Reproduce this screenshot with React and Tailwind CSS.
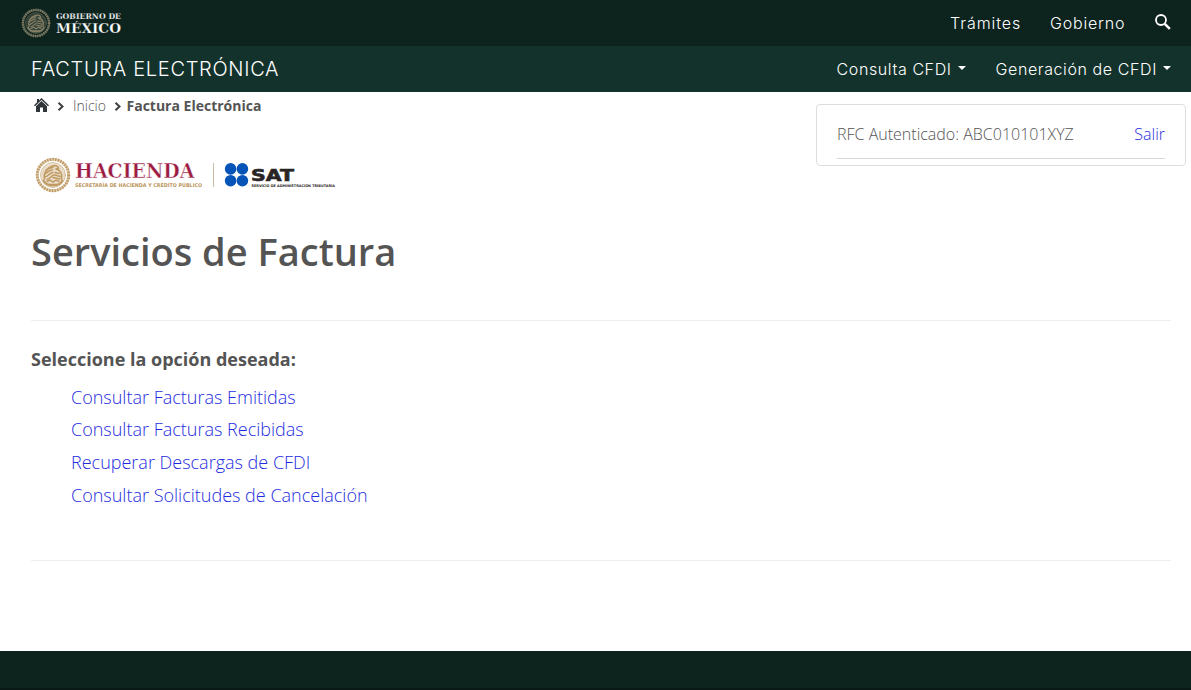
import React from "react";

const links = [
  "Consultar Facturas Emitidas",
  "Consultar Facturas Recibidas",
  "Recuperar Descargas de CFDI",
  "Consultar Solicitudes de Cancelación",
];

function Seal({ color, className }) {
  return (
    <svg viewBox="0 0 36 36" className={className} fill="none" stroke={color} strokeLinecap="round">
      <circle cx="18" cy="18" r="15.7" strokeWidth="3" strokeDasharray="1.4 1.3" strokeLinecap="butt" />
      <circle cx="18" cy="18" r="15.7" strokeWidth="2.8" opacity=".5" />
      <circle cx="18" cy="18" r="12.4" strokeWidth=".7" />
      <circle cx="18" cy="18" r="11.6" fill={color} fillOpacity=".35" stroke="none" />
      <path d="M9.5 22c-1-6 2-11 8-13 3-1 6 0 6 2.500l-3 .5c5 1 7 5 6 10" strokeWidth="1.6" />
      <path d="M11 13.500c2-2 4-3 7-3M9.500 17c3-1 4-4 8-4M10 20c3 0 4-4 8-4.500M12 22.500c3 0 4-4 7-4.500" strokeWidth="1.5" />
      <path d="M20 15.500l4 1M20 18l5 1.500M18 20.500l7 1.500" strokeWidth="1.500" />
      <path d="M8.500 23.500c3 6.500 16 6.500 19 0" strokeWidth="2" />
      <path d="M12 24.500l3-1.500 3 2 3-2 3 1.500M14 27.500h8" strokeWidth="1.500" />
    </svg>
  );
}

function GobiernoLogo() {
  return (
    <a className="flex items-center gap-[5px]">
      <Seal color="#827e66" className="h-[30px] w-[30px]" />
      <svg width="66" height="30" viewBox="0 0 66 30" fill="#fff" fontFamily="'DejaVu Serif', serif" fontWeight="700">
        <text x="0" y="11.2" fontSize="7.8" stroke="#0c231e" strokeWidth=".2" textLength="65" lengthAdjust="spacingAndGlyphs">GOBIERNO DE</text>
        <text x="0" y="25" fontSize="13" stroke="#0c231e" strokeWidth=".25" textLength="65" lengthAdjust="spacingAndGlyphs">MÉXICO</text>
      </svg>
    </a>
  );
}

function BrandLogos() {
  return (
    <div className="flex h-9 items-center">
      <Seal color="#bf9a62" className="h-9 w-9" />
      <svg width="270" height="36" viewBox="0 0 270 36">
        <text x="4" y="21" fontSize="19.5" fontWeight="700" fontFamily="'DejaVu Serif', serif" fill="#9b1b42" stroke="#fff" strokeWidth=".4" textLength="119.500" lengthAdjust="spacingAndGlyphs">HACIENDA</text>
        <text x="4" y="29.800" fontSize="5.2" fontWeight="700" fill="#bc955c" fontFamily="'DejaVu Sans', sans-serif" textLength="127" lengthAdjust="spacingAndGlyphs">SECRETARÍA DE HACIENDA Y CRÉDITO PÚBLICO</text>
        <path d="M142.500 6v24" stroke="#c9bba5" />
        <g fill="#0754b8">
          <circle cx="159.600" cy="11.900" r="5.800" />
          <circle cx="171.400" cy="11.900" r="5.800" />
          <circle cx="159.600" cy="23.700" r="5.800" />
          <circle cx="171.400" cy="23.700" r="5.800" />
        </g>
        <g fill="#292525" fontFamily="'DejaVu Sans', sans-serif" fontWeight="700">
          <text x="180" y="23.800" fontSize="15" stroke="#292525" strokeWidth=".6" textLength="43" lengthAdjust="spacingAndGlyphs">SAT</text>
          <text x="180.500" y="29.500" fontSize="3.600" textLength="83.500" lengthAdjust="spacingAndGlyphs">SERVICIO DE ADMINISTRACIÓN TRIBUTARIA</text>
        </g>
      </svg>
    </div>
  );
}

function Caret() {
  return <span className="ml-1.5 mb-[2px] border-x-4 border-t-4 border-x-transparent border-t-white" />;
}

function Chevron() {
  return (
    <svg width="7" height="9" viewBox="0 0 7 9" fill="none" stroke="#404041" strokeWidth="2">
      <path d="M1.500 .8l4 3.700-4 3.700" />
    </svg>
  );
}

export default function App() {
  return (
    <div className="flex h-[690px] w-full flex-col overflow-hidden bg-white font-['Open_Sans',sans-serif] text-[#545454]">
      <header className="font-['Inter',sans-serif] text-white">
        <div className="flex h-[46px] items-center justify-between bg-[#0c231e] pl-[21px] pr-5">
          <GobiernoLogo />
          <nav className="flex items-center text-base font-light">
            <a className="w-[70px] whitespace-nowrap tracking-[0.95px]">Trámites</a>
            <a className="ml-[30px] w-[75px] whitespace-nowrap tracking-[0.8px]">Gobierno</a>
            <svg width="16" height="16" viewBox="0 0 16 16" className="mb-[3px] ml-[30px]" fill="none" stroke="#fff">
              <circle cx="6" cy="6" r="5" strokeWidth="1.8" />
              <path d="M9.800 9.800l5 5" strokeWidth="2.600" />
            </svg>
          </nav>
        </div>
        <div className="flex h-[46px] items-center justify-between bg-[#13322b] pl-[31px] pr-5">
          <a className="whitespace-nowrap text-[20px] font-light tracking-[0.7px]">FACTURA ELECTRÓNICA</a>
          <nav className="flex text-base font-light">
            <a className="flex items-center whitespace-nowrap tracking-[0.6px]">Consulta CFDI<Caret /></a>
            <a className="ml-[30px] flex items-center whitespace-nowrap tracking-[0.6px]">Generación de CFDI<Caret /></a>
          </nav>
        </div>
      </header>

      <main className="h-[559px] pl-[31px] pr-5">
        <div className="flex h-[74px] items-start justify-between">
          <nav className="flex h-[26px] items-center pl-[3px] text-[14px] font-light">
            <svg width="15" height="14" viewBox="0 0 15 14" fill="#303539">
              <path d="M7.500 0L15 7.200l-1 1L7.500 2 1 8.200l-1-1L3 4.300V1h2v1.400zM7.500 3L13 8.300V14H9V9.500H6V14H2V8.300z" />
            </svg>
            <span className="ml-2 flex pt-0.5"><Chevron /></span>
            <a className="ml-[9px] w-[41px]">Inicio</a>
            <span className="flex pt-0.5"><Chevron /></span>
            <span className="ml-[5.500px] whitespace-nowrap font-bold">Factura Electrónica</span>
          </nav>
          <div className="-mr-[15px] mt-3 h-[62px] w-[370px] rounded border border-[#dddfdf] px-5 font-light">
            <div className="flex h-[54px] items-center justify-between border-b border-[#d5d8d8] pt-1 text-base">
              <span className="whitespace-nowrap">RFC Autenticado: ABC010101XYZ</span>
              <a className="text-[#1e2ce0]">Salir</a>
            </div>
          </div>
        </div>

        <div className="-mt-[9px] pl-[3.500px]">
          <BrandLogos />
        </div>
        <h1 className="mt-[31px] text-[38px] leading-[54px] font-semibold">Servicios de Factura</h1>
        <hr className="mt-[42px] border-[#eeeeee]" />
        <h2 className="mt-[25px] text-[18px] leading-[26px] font-bold">Seleccione la opción deseada:</h2>
        <ul className="mt-[8.700px] pl-10 text-[18px] leading-[32.700px] font-light text-[#1e2ce0]">
          {links.map((label) => (
            <li key={label}><a>{label}</a></li>
          ))}
        </ul>
        <hr className="mt-[48px] border-[#eeeeee]" />
      </main>
      <footer className="h-[39px] border-b-2 border-[#091a16] bg-[#0c231e]" />
    </div>
  );
}
